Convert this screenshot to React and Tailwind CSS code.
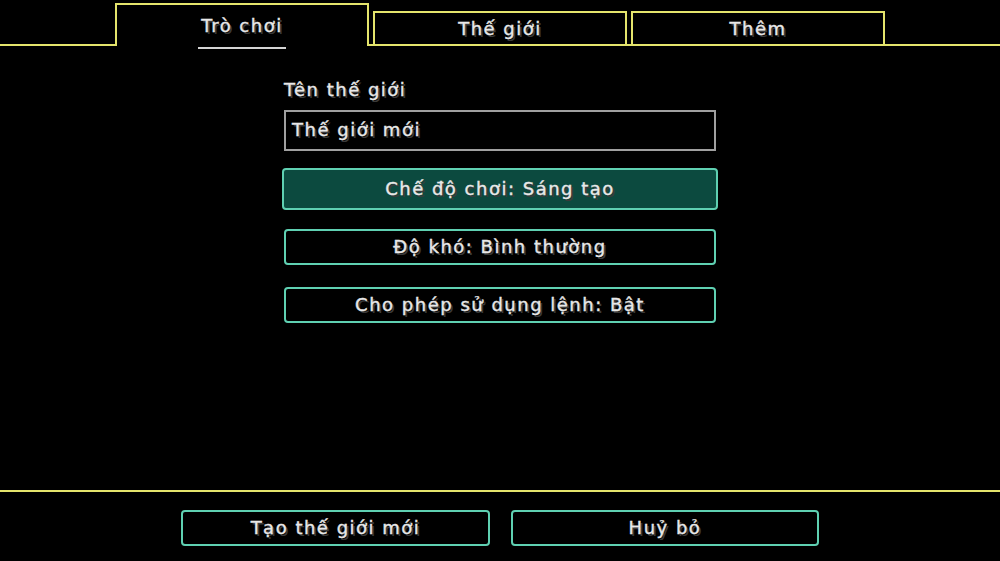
import React from "react";

const txt =
  "font-['DejaVu_Sans',sans-serif] text-[18px] tracking-[1.5px] text-[#e8e8e8] [text-shadow:2px_2px_0_#3a3a3a] [-webkit-text-stroke:0.4px_#e8e8e8] leading-[22px] whitespace-nowrap";

function Btn({ children, active, className = "" }) {
  return (
    <div
      className={`flex items-center justify-center rounded-[4px] border-2 border-[#5fd0b2] ${
        active ? "bg-[#0c4a3f]" : "bg-black"
      } ${className}`}
    >
      <span className={txt}>{children}</span>
    </div>
  );
}

export default function App() {
  return (
    <div className="flex h-[561px] w-[1000px] flex-col bg-black">
      {/* Tabs */}
      <div className="flex h-[46px] items-end">
        <div className="h-[2px] w-[115px] bg-[#e4e46c]" />
        <div className="flex h-[43px] w-[254px] flex-col items-center border-2 border-b-0 border-[#e4e46c]">
          <span className={`${txt} mt-[10px] border-b-2 border-[#d4d4d4] px-[3px] pb-[10px]`}>Trò chơi</span>
        </div>
        <div className="flex h-[35px] flex-1 items-end gap-[4px] border-b-2 border-[#e4e46c] pl-[4px]">
          <div className="flex h-[33px] w-[254px] items-center justify-center border-2 border-b-0 border-[#e4e46c]">
            <span className={txt}>Thế giới</span>
          </div>
          <div className="flex h-[33px] w-[254px] items-center justify-center border-2 border-b-0 border-[#e4e46c]">
            <span className={txt}>Thêm</span>
          </div>
        </div>
      </div>

      {/* Main */}
      <div className="flex flex-1 flex-col">
        <div className="mx-auto flex w-[436px] flex-col">
          <div className="ml-[2px] mt-[32px]">
            <span className={txt}>Tên thế giới</span>
          </div>
          <div className="mx-[2px] mt-[8px] flex h-[41px] items-center border-2 border-[#a0a0a0] bg-black px-[6px] pb-[2px]">
            <span className={txt}>Thế giới mới</span>
          </div>
          <Btn active className="mt-[17px] h-[42px] w-[436px]">
            Chế độ chơi: Sáng tạo
          </Btn>
          <Btn className="mx-[2px] mt-[19px] h-[36px]">Độ khó: Bình thường</Btn>
          <Btn className="mx-[2px] mt-[22px] h-[36px]">Cho phép sử dụng lệnh: Bật</Btn>
        </div>
      </div>

      {/* Footer */}
      <div className="h-[71px] border-t-2 border-[#e4e46c]">
        <div className="mt-[18px] flex justify-center gap-[21px]">
          <Btn className="h-[36px] w-[309px]">Tạo thế giới mới</Btn>
          <Btn className="h-[36px] w-[308px]">Huỷ bỏ</Btn>
        </div>
      </div>
    </div>
  );
}
